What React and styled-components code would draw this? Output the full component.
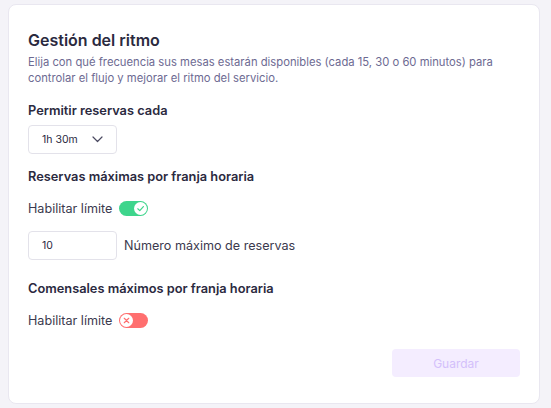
import React, { useState } from 'react';
import styled, { createGlobalStyle } from 'styled-components';

const GlobalStyle = createGlobalStyle`
  body {
    margin: 0;
    background: #f4f3f8;
    font-family: Inter, 'Noto Sans', sans-serif;
  }
`;

const Card = styled.div`
  box-sizing: border-box;
  margin: 4px 11px 0 8px;
  height: 400px;
  background: #fff;
  border: 1px solid #e9e7f0;
  border-radius: 8px;
  padding: 25px 19px 0 19px;
  display: flex;
  flex-direction: column;
`;

const Title = styled.h2`
  margin: 0;
  font-size: 16px;
  line-height: 21px;
  font-weight: 600;
  color: #2b2a3f;
`;

const Description = styled.p`
  margin: 3px 0 0;
  font-size: 11.25px;
  line-height: 16px;
  color: #6d6a92;
`;

const SectionTitle = styled.h3`
  margin: ${(p) => p.$top}px 0 0;
  font-size: 12.8px;
  line-height: 17px;
  font-weight: 600;
  color: #2b2a3f;
`;

const Row = styled.div`
  display: flex;
  align-items: center;
  gap: 7px;
  margin-top: ${(p) => p.$top}px;
`;

const Label = styled.span`
  font-size: 12.6px;
  color: #3b3a4e;
`;

const Field = styled.div`
  box-sizing: border-box;
  width: 89px;
  height: 29px;
  border: 1px solid #e3e2ea;
  border-radius: 4px;
  display: flex;
  align-items: center;
  justify-content: space-between;
  padding: 0 13px;
  font-size: 10.5px;
  color: #2b2a3f;
`;

const Toggle = styled.button`
  position: relative;
  width: 29px;
  height: 15px;
  border: none;
  border-radius: 8px;
  padding: 0;
  cursor: pointer;
  background: ${(p) => (p.$on ? '#3ed58c' : '#ff6f6f')};
`;

const Knob = styled.span`
  position: absolute;
  top: 1px;
  left: ${(p) => (p.$on ? '15px' : '1px')};
  width: 13px;
  height: 13px;
  border-radius: 50%;
  background: #fff;
  display: flex;
  align-items: center;
  justify-content: center;
`;

const Footer = styled.div`
  margin-top: auto;
  margin-bottom: 26px;
  display: flex;
  justify-content: flex-end;
`;

const SaveButton = styled.button`
  width: 128px;
  height: 28px;
  border: none;
  border-radius: 4px;
  background: #f4edff;
  color: #d3c0fb;
  font-family: inherit;
  font-size: 12px;
  cursor: not-allowed;
`;

const Check = () => (
  <svg width="9" height="9" viewBox="0 0 10 10" fill="none" stroke="#3ed58c" strokeWidth="1.3" strokeLinecap="round" strokeLinejoin="round">
    <path d="M2 5.3 L4.2 7.4 L8.2 2.8" />
  </svg>
);

const Cross = () => (
  <svg width="9" height="9" viewBox="0 0 10 10" fill="none" stroke="#ff6f6f" strokeWidth="1.3" strokeLinecap="round">
    <path d="M2.5 2.5 L7.5 7.5 M7.5 2.5 L2.5 7.5" />
  </svg>
);

const Chevron = () => (
  <svg width="11" height="7" viewBox="0 0 11 7" fill="none" stroke="#4a4960" strokeWidth="1.2" strokeLinecap="round" strokeLinejoin="round">
    <path d="M1 1 L5.5 5.5 L10 1" />
  </svg>
);

const Switch = ({ on, onClick }) => (
  <Toggle $on={on} onClick={onClick}>
    <Knob $on={on}>{on ? <Check /> : <Cross />}</Knob>
  </Toggle>
);

export default function App() {
  const [reservasOn, setReservasOn] = useState(true);
  const [comensalesOn, setComensalesOn] = useState(false);

  return (
    <>
      <GlobalStyle />
      <Card>
        <Title>Gestión del ritmo</Title>
        <Description>
          Elija con qué frecuencia sus mesas estarán disponibles (cada 15, 30 o 60 minutos) para
          controlar el flujo y mejorar el ritmo del servicio.
        </Description>

        <SectionTitle $top={16}>Permitir reservas cada</SectionTitle>
        <Row $top={6}>
          <Field>
            <span>1h 30m</span>
            <Chevron />
          </Field>
        </Row>

        <SectionTitle $top={14}>Reservas máximas por franja horaria</SectionTitle>
        <Row $top={16}>
          <Label>Habilitar límite</Label>
          <Switch on={reservasOn} onClick={() => setReservasOn(!reservasOn)} />
        </Row>
        <Row $top={15}>
          <Field>
            <span>10</span>
          </Field>
          <Label>Número máximo de reservas</Label>
        </Row>

        <SectionTitle $top={20}>Comensales máximos por franja horaria</SectionTitle>
        <Row $top={16}>
          <Label>Habilitar límite</Label>
          <Switch on={comensalesOn} onClick={() => setComensalesOn(!comensalesOn)} />
        </Row>

        <Footer>
          <SaveButton disabled>Guardar</SaveButton>
        </Footer>
      </Card>
    </>
  );
}
